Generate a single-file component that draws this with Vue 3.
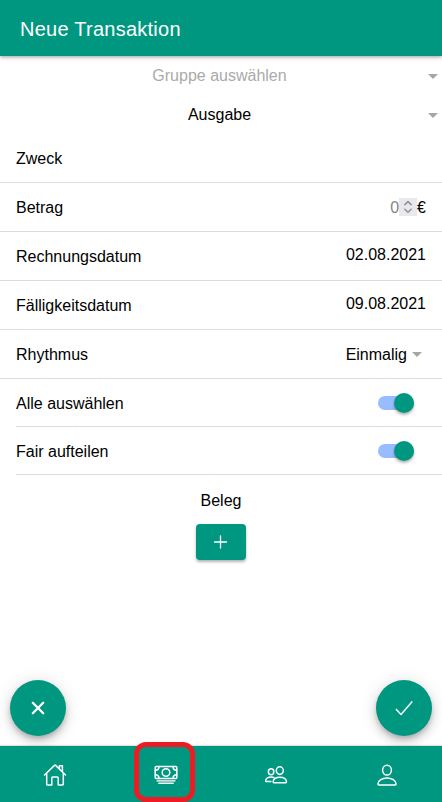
<script setup>
const selects = [
  { label: 'Gruppe auswählen', placeholder: true },
  { label: 'Ausgabe', placeholder: false },
]
const toggles = ['Alle auswählen', 'Fair aufteilen']
</script>

<template>
  <div class="page">
    <header class="toolbar">Neue Transaktion</header>

    <main class="content">
      <div v-for="s in selects" :key="s.label" class="select" :class="{ placeholder: s.placeholder }">
        <span class="select-text">{{ s.label }}</span>
        <i class="caret"></i>
      </div>

      <div class="item"><span>Zweck</span></div>
      <div class="item">
        <span>Betrag</span>
        <div class="amount">
          <span class="zero">0</span>
          <span class="spinner">
            <svg width="18" height="18" viewBox="0 0 18 18">
              <path d="M5.8 6.6 9 3.6l3.2 3M5.8 11.3l3.2 3 3.2-3" />
            </svg>
          </span>
          <span>€</span>
        </div>
      </div>
      <div class="item"><span>Rechnungsdatum</span><span class="date">02.08.2021</span></div>
      <div class="item"><span>Fälligkeitsdatum</span><span class="date">09.08.2021</span></div>
      <div class="item">
        <span>Rhythmus</span>
        <div class="rhythm"><span>Einmalig</span><i class="caret"></i></div>
      </div>

      <div v-for="t in toggles" :key="t" class="toggle-item">
        <span>{{ t }}</span>
        <div class="toggle"><i class="knob"></i></div>
      </div>

      <section class="receipt">
        <span>Beleg</span>
        <button class="add" type="button">
          <svg width="14" height="14" viewBox="0 0 14 14"><path d="M6.5 1v12M.5 7h12" /></svg>
        </button>
      </section>
    </main>

    <div class="fabs">
      <button class="fab" type="button">
        <svg width="24" height="24" viewBox="0 0 24 24">
          <path class="cross" d="m6.8 6.8 10.4 10.4M17.2 6.8 6.8 17.2" />
        </svg>
      </button>
      <button class="fab" type="button">
        <svg width="24" height="24" viewBox="0 0 24 24">
          <path class="check" d="m4.4 13.4 4.6 5L19.8 5.9" />
        </svg>
      </button>
    </div>

    <nav class="tabs">
      <div class="tab">
        <svg width="24" height="24" viewBox="0 0 24 24">
          <path d="M3.7 10.3v10.9a.8.8 0 0 0 .8.8h4.3v-6.9a1 1 0 0 1 1-1h4.4a1 1 0 0 1 1 1V22h4.3a.8.8 0 0 0 .8-.8V10.3M1.5 12 11.5 2.4a.8.8 0 0 1 1.1 0l9.9 9.6M16.4 5.6V2.7h3v6" />
        </svg>
      </div>
      <div class="tab">
        <svg width="24" height="24" viewBox="0 0 24 24">
          <rect x="1.2" y="3.6" width="21.6" height="11.9" rx="1" />
          <circle cx="12" cy="9.5" r="3.8" />
          <path d="M1.2 7.4c2.2 0 3.8-1.6 3.8-3.8M22.8 7.4c-2.2 0-3.8-1.6-3.8-3.8M1.2 11.7c2.2 0 3.8 1.6 3.8 3.8M22.8 11.7c-2.2 0-3.8 1.6-3.8 3.8" />
          <path class="band" d="M3.2 17.8h17.6" />
          <path d="M4.8 20.3h14.4" />
        </svg>
        <i class="highlight"></i>
      </div>
      <div class="tab">
        <svg width="24" height="24" viewBox="0 0 24 24">
          <ellipse cx="15.8" cy="7.6" rx="3.5" ry="3.8" />
          <path d="M9.1 19c0-3 3.1-4.8 6.7-4.8s6.7 1.8 6.7 4.8c0 .4-.3.7-.7.7h-12c-.4 0-.7-.3-.7-.7Z" />
          <ellipse cx="7.1" cy="8.8" rx="2.7" ry="3" />
          <path d="M9.8 14.5c-.8-.3-1.7-.4-2.6-.4-3 0-5.6 1.5-5.6 3.8 0 .4.3.7.7.7h4.6" />
        </svg>
      </div>
      <div class="tab">
        <svg width="24" height="24" viewBox="0 0 24 24">
          <ellipse cx="12" cy="7.2" rx="4.4" ry="4.9" />
          <path d="M2.9 21.1c0-3.8 4.4-6.2 9.1-6.2s9.1 2.4 9.1 6.2c0 .6-.4 1-1 1H3.9c-.6 0-1-.4-1-1Z" />
        </svg>
      </div>
    </nav>
  </div>
</template>

<style>
body {
  margin: 0;
  background: #fff;
}
</style>

<style scoped>
.page {
  display: flex;
  flex-direction: column;
  width: 100%;
  height: 802px;
  overflow: hidden;
  font: 16px/20px "Liberation Sans", Arial, sans-serif;
  color: #000;
}
.toolbar {
  flex: none;
  height: 56px;
  padding: 2px 20px 0;
  box-sizing: border-box;
  background: #009780;
  color: #fff;
  font-size: 20px;
  line-height: 54px;
  letter-spacing: 0.25px;
  box-shadow: 0 1px 4px rgba(0, 0, 0, 0.4);
}
.content {
  flex: 1;
}
.select {
  display: flex;
  align-items: center;
  height: 39px;
  padding-right: 4px;
}
.select-text {
  flex: 1;
  text-align: center;
  padding-left: 11px;
}
.select.placeholder .select-text {
  color: #aaa;
}
.caret {
  width: 0;
  height: 0;
  border: 5px solid transparent;
  border-top-color: #a6a6a6;
  border-bottom: 0;
  margin-top: 2px;
}
.item {
  display: flex;
  align-items: center;
  justify-content: space-between;
  height: 46px;
  padding: 2px 16px 0;
  border-bottom: 1px solid #dcdcdc;
}
.amount,
.rhythm {
  display: flex;
  align-items: center;
}
.zero {
  color: #858585;
}
.spinner {
  width: 18px;
  height: 18px;
  margin-bottom: 2px;
  background: #e9e9ed;
}
.spinner svg {
  display: block;
  stroke: #8f8f9d;
  stroke-width: 1.5;
}
.date {
  padding-bottom: 4px;
}
.rhythm {
  gap: 5px;
  padding-right: 4px;
}
.rhythm .caret {
  margin-top: 0;
  margin-bottom: 1px;
}
.toggle-item {
  display: flex;
  align-items: center;
  justify-content: space-between;
  height: 46px;
  margin-left: 16px;
  padding: 1px 28px 0 0;
  border-bottom: 1px solid #dcdcdc;
}
.toggle-item > span {
  padding-top: 2px;
}
.toggle {
  display: flex;
  align-items: center;
  justify-content: flex-end;
  width: 36px;
  height: 14px;
  border-radius: 7px;
  background: #99bbff;
}
.knob {
  width: 20px;
  height: 20px;
  flex: none;
  border-radius: 50%;
  background: #009780;
  box-shadow: 0 2px 3px rgba(0, 0, 0, 0.3);
}
.receipt {
  display: flex;
  flex-direction: column;
  align-items: center;
  gap: 13px;
  padding-top: 16px;
}
svg {
  fill: none;
  stroke: #fff;
  stroke-width: 1.5;
  stroke-linecap: round;
  stroke-linejoin: round;
}
.add {
  display: flex;
  align-items: center;
  justify-content: center;
  width: 50px;
  height: 36px;
  padding: 0;
  border: 0;
  border-radius: 4px;
  background: #009780;
  box-shadow: 0 2px 3px rgba(0, 0, 0, 0.3);
}
.add svg {
  stroke-width: 1.3;
}
.fabs {
  display: flex;
  justify-content: space-between;
  padding: 0 10px 10px;
}
.fab {
  display: flex;
  align-items: center;
  justify-content: center;
  width: 56px;
  height: 56px;
  padding: 0;
  border: 0;
  border-radius: 50%;
  background: #009780;
  box-shadow: 0 3px 5px -1px rgba(0, 0, 0, 0.2), 0 6px 10px rgba(0, 0, 0, 0.14), 0 1px 18px rgba(0, 0, 0, 0.12);
}
.cross {
  stroke-width: 2.3;
}
.check {
  stroke-width: 1.5;
}
.band {
  stroke-width: 1.8;
  stroke-opacity: 0.75;
}
.tabs {
  flex: none;
  display: flex;
  height: 56px;
  background: #009780;
  box-shadow: 0 -1px 1px rgba(0, 0, 0, 0.12);
}
.tab {
  flex: 1;
  display: flex;
  align-items: center;
  justify-content: center;
  position: relative;
  padding-top: 2px;
}
.highlight {
  position: absolute;
  left: 23.5px;
  top: -4px;
  width: 51px;
  height: 50px;
  border: 5px solid #ed1c24;
  border-radius: 12px;
}
</style>
